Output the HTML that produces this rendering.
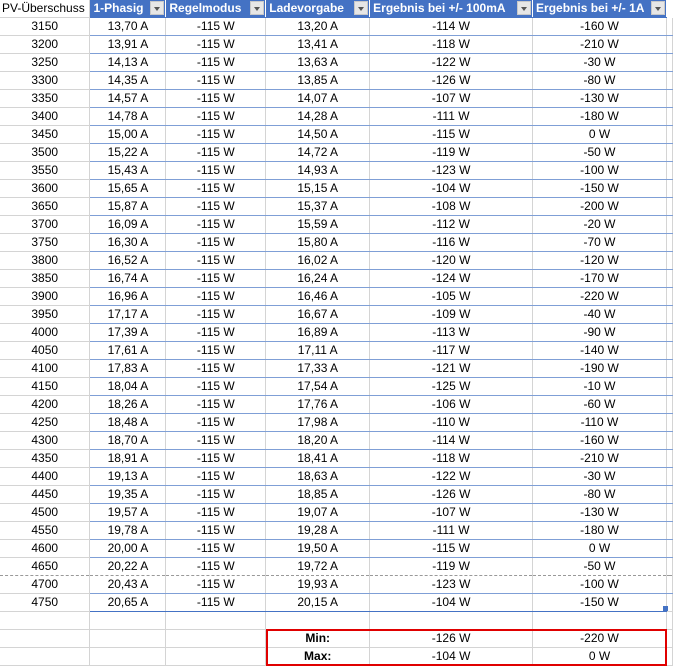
<!DOCTYPE html>
<html><head><meta charset="utf-8"><style>
body{margin:0;background:#fff;width:673px;height:667px;overflow:hidden;position:relative;font-family:"Liberation Sans",Arial,sans-serif;font-size:12px;color:#000}
table{border-collapse:collapse;table-layout:fixed;position:absolute;left:0;top:0}
td{height:17px;padding:0;text-align:center;border-right:1px solid #d4d4d4;border-bottom:1px solid #7f9fd6;white-space:nowrap;overflow:hidden;line-height:17px}
td:first-child{border-bottom:1px solid #d4d4d4}
tr.h td{height:16px;background:#4472c4;color:#fff;font-weight:bold;text-align:left;padding-left:3px;position:relative;border-right:1px solid #fff;border-bottom:1px solid #4472c4}
tr.h td:first-child{background:#fff;color:#000;font-weight:normal;padding-left:2px;border-right:1px solid #d4d4d4;border-bottom:1px solid #d4d4d4}
.dd{position:absolute;right:1px;top:1px;width:14px;height:14px;background:#e6e6e6;border:1px solid #c8c8c8;box-sizing:border-box}
.dd:after{content:"";position:absolute;left:3px;top:5px;border-left:3.5px solid transparent;border-right:3.5px solid transparent;border-top:4px solid #555}
tr.dash td{border-bottom:1px dashed #999}
tr.last td{border-bottom:1px solid #4472c4}
tr.last td:first-child{border-bottom:1px solid #d4d4d4}
tr.x td{border-bottom:1px solid #d4d4d4}
b{font-weight:bold}
</style></head><body>
<table>
<colgroup><col style="width:90px"><col style="width:76px"><col style="width:100px"><col style="width:104px"><col style="width:163px"><col style="width:134px"><col style="width:6px"></colgroup>
<tr class="h"><td>PV-Überschuss</td><td>1-Phasig<span class="dd"></span></td><td>Regelmodus<span class="dd"></span></td><td>Ladevorgabe<span class="dd"></span></td><td>Ergebnis bei +/- 100mA<span class="dd"></span></td><td>Ergebnis bei +/- 1A<span class="dd"></span></td><td style="background:#fff;border:none"></td></tr>
<tr><td>3150</td><td>13,70 A</td><td>-115 W</td><td>13,20 A</td><td>-114 W</td><td>-160 W</td><td></td></tr>
<tr><td>3200</td><td>13,91 A</td><td>-115 W</td><td>13,41 A</td><td>-118 W</td><td>-210 W</td><td></td></tr>
<tr><td>3250</td><td>14,13 A</td><td>-115 W</td><td>13,63 A</td><td>-122 W</td><td>-30 W</td><td></td></tr>
<tr><td>3300</td><td>14,35 A</td><td>-115 W</td><td>13,85 A</td><td>-126 W</td><td>-80 W</td><td></td></tr>
<tr><td>3350</td><td>14,57 A</td><td>-115 W</td><td>14,07 A</td><td>-107 W</td><td>-130 W</td><td></td></tr>
<tr><td>3400</td><td>14,78 A</td><td>-115 W</td><td>14,28 A</td><td>-111 W</td><td>-180 W</td><td></td></tr>
<tr><td>3450</td><td>15,00 A</td><td>-115 W</td><td>14,50 A</td><td>-115 W</td><td>0 W</td><td></td></tr>
<tr><td>3500</td><td>15,22 A</td><td>-115 W</td><td>14,72 A</td><td>-119 W</td><td>-50 W</td><td></td></tr>
<tr><td>3550</td><td>15,43 A</td><td>-115 W</td><td>14,93 A</td><td>-123 W</td><td>-100 W</td><td></td></tr>
<tr><td>3600</td><td>15,65 A</td><td>-115 W</td><td>15,15 A</td><td>-104 W</td><td>-150 W</td><td></td></tr>
<tr><td>3650</td><td>15,87 A</td><td>-115 W</td><td>15,37 A</td><td>-108 W</td><td>-200 W</td><td></td></tr>
<tr><td>3700</td><td>16,09 A</td><td>-115 W</td><td>15,59 A</td><td>-112 W</td><td>-20 W</td><td></td></tr>
<tr><td>3750</td><td>16,30 A</td><td>-115 W</td><td>15,80 A</td><td>-116 W</td><td>-70 W</td><td></td></tr>
<tr><td>3800</td><td>16,52 A</td><td>-115 W</td><td>16,02 A</td><td>-120 W</td><td>-120 W</td><td></td></tr>
<tr><td>3850</td><td>16,74 A</td><td>-115 W</td><td>16,24 A</td><td>-124 W</td><td>-170 W</td><td></td></tr>
<tr><td>3900</td><td>16,96 A</td><td>-115 W</td><td>16,46 A</td><td>-105 W</td><td>-220 W</td><td></td></tr>
<tr><td>3950</td><td>17,17 A</td><td>-115 W</td><td>16,67 A</td><td>-109 W</td><td>-40 W</td><td></td></tr>
<tr><td>4000</td><td>17,39 A</td><td>-115 W</td><td>16,89 A</td><td>-113 W</td><td>-90 W</td><td></td></tr>
<tr><td>4050</td><td>17,61 A</td><td>-115 W</td><td>17,11 A</td><td>-117 W</td><td>-140 W</td><td></td></tr>
<tr><td>4100</td><td>17,83 A</td><td>-115 W</td><td>17,33 A</td><td>-121 W</td><td>-190 W</td><td></td></tr>
<tr><td>4150</td><td>18,04 A</td><td>-115 W</td><td>17,54 A</td><td>-125 W</td><td>-10 W</td><td></td></tr>
<tr><td>4200</td><td>18,26 A</td><td>-115 W</td><td>17,76 A</td><td>-106 W</td><td>-60 W</td><td></td></tr>
<tr><td>4250</td><td>18,48 A</td><td>-115 W</td><td>17,98 A</td><td>-110 W</td><td>-110 W</td><td></td></tr>
<tr><td>4300</td><td>18,70 A</td><td>-115 W</td><td>18,20 A</td><td>-114 W</td><td>-160 W</td><td></td></tr>
<tr><td>4350</td><td>18,91 A</td><td>-115 W</td><td>18,41 A</td><td>-118 W</td><td>-210 W</td><td></td></tr>
<tr><td>4400</td><td>19,13 A</td><td>-115 W</td><td>18,63 A</td><td>-122 W</td><td>-30 W</td><td></td></tr>
<tr><td>4450</td><td>19,35 A</td><td>-115 W</td><td>18,85 A</td><td>-126 W</td><td>-80 W</td><td></td></tr>
<tr><td>4500</td><td>19,57 A</td><td>-115 W</td><td>19,07 A</td><td>-107 W</td><td>-130 W</td><td></td></tr>
<tr><td>4550</td><td>19,78 A</td><td>-115 W</td><td>19,28 A</td><td>-111 W</td><td>-180 W</td><td></td></tr>
<tr><td>4600</td><td>20,00 A</td><td>-115 W</td><td>19,50 A</td><td>-115 W</td><td>0 W</td><td></td></tr>
<tr class="dash"><td>4650</td><td>20,22 A</td><td>-115 W</td><td>19,72 A</td><td>-119 W</td><td>-50 W</td><td></td></tr>
<tr><td>4700</td><td>20,43 A</td><td>-115 W</td><td>19,93 A</td><td>-123 W</td><td>-100 W</td><td></td></tr>
<tr class="last"><td>4750</td><td>20,65 A</td><td>-115 W</td><td>20,15 A</td><td>-104 W</td><td>-150 W</td><td style="border-bottom:1px solid #d4d4d4"></td></tr>
<tr class="x"><td></td><td></td><td></td><td></td><td></td><td></td><td></td></tr>
<tr class="x"><td></td><td></td><td></td><td><b>Min:</b></td><td>-126 W</td><td>-220 W</td><td></td></tr>
<tr class="x"><td></td><td></td><td></td><td><b>Max:</b></td><td>-104 W</td><td>0 W</td><td></td></tr>
</table>
<div style="position:absolute;left:663px;top:606px;width:5px;height:5px;background:#4472c4"></div>
<div style="position:absolute;left:266px;top:629px;width:401px;height:37px;border:2px solid #e00000;box-sizing:border-box"></div>
</body></html>
